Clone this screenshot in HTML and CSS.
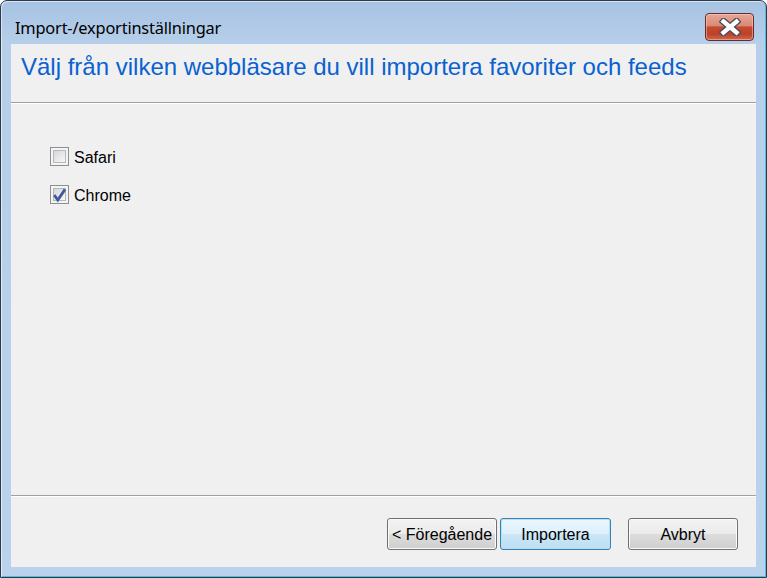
FILE: index.html
```html
<!DOCTYPE html>
<html lang="sv">
<head>
<meta charset="utf-8">
<title>Import-/exportinställningar</title>
<link rel="stylesheet" href="styles.css">
</head>
<body>
<div class="window">
  <div class="titlebar">
    <span class="title">Import-/exportinställningar</span>
    <div class="close">
      <svg width="22" height="18" viewBox="0 0 22 18">
        <path d="M4.5 3.5 L17.5 14.5 M17.5 3.5 L4.5 14.5" stroke="#4a4c5e" stroke-width="7" stroke-linecap="square" fill="none"/>
        <path d="M4.5 3.5 L17.5 14.5 M17.5 3.5 L4.5 14.5" stroke="#ffffff" stroke-width="4.4" stroke-linecap="square" fill="none"/>
      </svg>
    </div>
  </div>
  <div class="client">
    <div class="header">
      <h1 class="instruction">Välj från vilken webbläsare du vill importera favoriter och feeds</h1>
    </div>
    <div class="sep"></div>
    <div class="content">
      <div class="option">
        <span class="cb"><span class="cb-inner"></span></span>
        <span class="label">Safari</span>
      </div>
      <div class="option">
        <span class="cb"><span class="cb-inner"></span>
          <svg class="check" width="19" height="19" viewBox="0 0 19 19">
            <path d="M4.3 10 L7.8 15 L15 4.4" stroke="#3f5a9c" stroke-width="2.8" fill="none" stroke-linejoin="miter"/>
          </svg>
        </span>
        <span class="label">Chrome</span>
      </div>
    </div>
    <div class="sep"></div>
    <div class="footer">
      <button class="btn">&lt; Föregående</button>
      <button class="btn btn-default">Importera</button>
      <button class="btn btn-cancel">Avbryt</button>
    </div>
  </div>
</div>
</body>
</html>
```

FILE: styles.css
```css
html, body {
  margin: 0;
  padding: 0;
  background: #ffffff;
}

.window {
  box-sizing: border-box;
  width: 767px;
  height: 578px;
  border: 1px solid #2e3a47;
  border-radius: 7px 7px 0 0;
  padding: 0 10px 10px 10px;
  background: linear-gradient(to bottom, #a7c3e3 0px, #b6cfea 44px, #bad2eb 100%);
  box-shadow: inset 1px 1px 0 rgba(255,255,255,0.55), inset -1px -1px 0 #3fc6e4;
  display: flex;
  flex-direction: column;
}

.titlebar {
  height: 43px;
  display: flex;
  align-items: flex-start;
  flex-shrink: 0;
}

.title {
  font-family: "Noto Sans", "Open Sans", sans-serif;
  font-size: 16.4px;
  letter-spacing: -0.2px;
  line-height: 20px;
  color: #000000;
  padding-top: 17px;
  padding-left: 4px;
}

.close {
  margin-left: auto;
  margin-right: 2px;
  margin-top: 12px;
  box-sizing: border-box;
  width: 49px;
  height: 28px;
  border: 1px solid #6b2a24;
  border-radius: 4px;
  background: linear-gradient(to bottom, #e6a796 0%, #d98a75 45%, #c54a30 50%, #bd4128 78%, #cf6b52 100%);
  box-shadow: inset 0 0 0 1px rgba(255,220,210,0.45);
  display: flex;
  align-items: center;
  justify-content: center;
}

.client {
  flex: 1;
  background: #f0f0f0;
  display: flex;
  flex-direction: column;
}

.header {
  height: 58px;
  box-sizing: border-box;
  padding: 9px 0 0 10px;
}

.instruction {
  margin: 0;
  font-family: "Liberation Sans", Arial, sans-serif;
  font-weight: normal;
  font-size: 24px;
  line-height: 28px;
  color: #0a62d0;
  white-space: nowrap;
}

.sep {
  height: 1px;
  background: #a0a0a0;
  border-bottom: 1px solid #ffffff;
  flex-shrink: 0;
}

.content {
  flex: 1;
  padding: 43px 0 0 39px;
  display: flex;
  flex-direction: column;
  gap: 19px;
}

.option {
  display: flex;
  align-items: flex-start;
  gap: 5px;
  height: 19px;
}

.cb {
  position: relative;
  box-sizing: border-box;
  width: 19px;
  height: 19px;
  border: 1px solid #8f8f8f;
  background: #f4f4f4;
  padding: 2px;
}

.cb-inner {
  display: block;
  box-sizing: border-box;
  width: 100%;
  height: 100%;
  border: 1px solid #b5b9be;
  background: linear-gradient(135deg, #d4d6d9 0%, #e6e7e8 50%, #f7f7f7 100%);
}

.check {
  position: absolute;
  left: -1px;
  top: -1px;
}

.label {
  font-family: "Liberation Sans", Arial, sans-serif;
  font-size: 16px;
  line-height: 19px;
  padding-top: 1px;
  color: #000000;
}

.footer {
  height: 70px;
  box-sizing: border-box;
  padding: 21px 18px 17px 0;
  display: flex;
  justify-content: flex-end;
  align-items: flex-start;
  flex-shrink: 0;
}

.btn {
  box-sizing: border-box;
  width: 110px;
  height: 32px;
  margin: 0;
  padding: 2px 0 0 0;
  border: 1px solid #707070;
  border-radius: 3px;
  background: linear-gradient(to bottom, #f2f2f2 0%, #ebebeb 50%, #dddddd 50%, #cfcfcf 100%);
  box-shadow: inset 0 0 0 1px #fbfbfb;
  font-family: "Liberation Sans", Arial, sans-serif;
  font-size: 16px;
  color: #000000;
  text-align: center;
}

.btn-default {
  width: 111px;
  margin-left: 3px;
  border-color: #3c7fb1;
  background: linear-gradient(to bottom, #eaf6fd 0%, #dcf0fb 50%, #cbe7f7 50%, #bcdff2 100%);
  box-shadow: inset 0 0 0 1px #b6e2f9;
}

.btn-cancel {
  margin-left: 17px;
}
```
